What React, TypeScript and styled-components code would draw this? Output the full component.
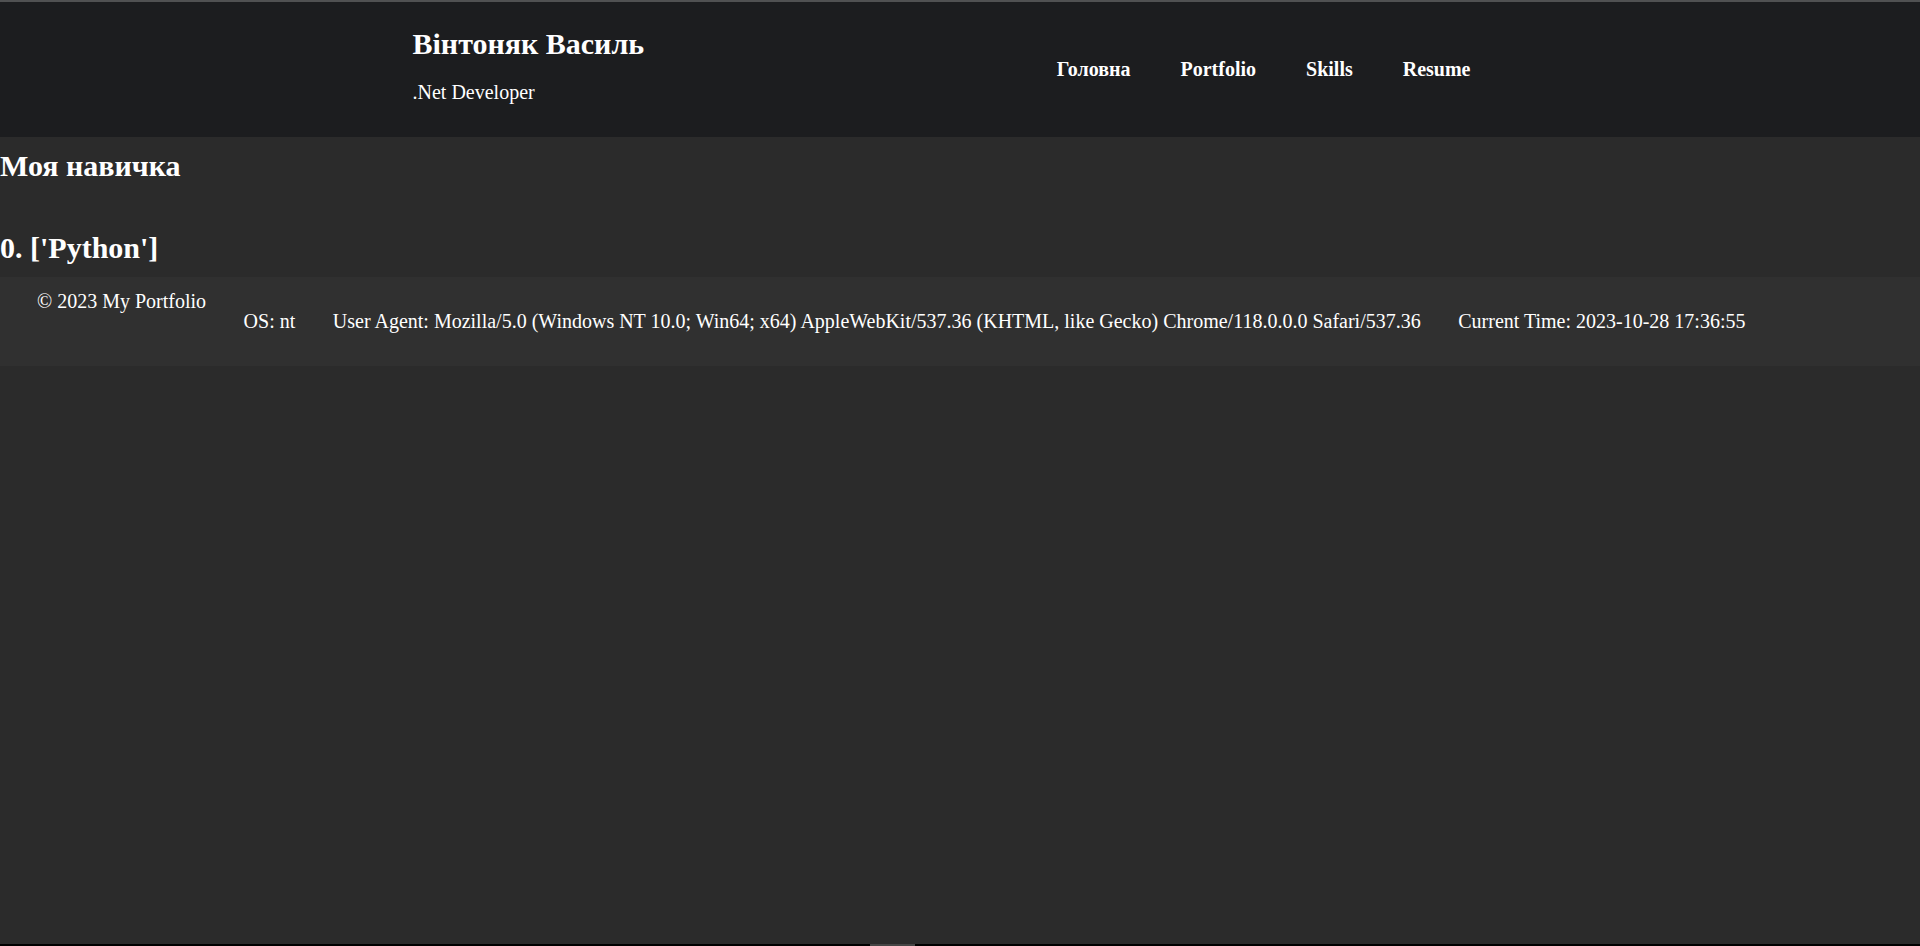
import React from "react";
import styled, { createGlobalStyle } from "styled-components";

const GlobalStyle = createGlobalStyle`
  html, body {
    margin: 0;
    padding: 0;
    background: #2b2b2b;
  }
  body {
    font-family: "Liberation Serif", "Times New Roman", serif;
    font-size: 20px;
    line-height: 23px;
    color: #ffffff;
  }
  * { box-sizing: border-box; }
`;

const Page = styled.div`
  min-height: 100vh;
  display: flex;
  flex-direction: column;
  background: #2b2b2b;
  border-top: 2px solid #505152;
`;

const Header = styled.header`
  height: 135px;
  background: #1c1d1f;
`;

const HeaderInner = styled.div`
  width: 1095px;
  height: 100%;
  margin: 0 auto;
  display: flex;
  justify-content: space-between;
  align-items: flex-start;
`;

const Brand = styled.div`
  display: flex;
  flex-direction: column;
`;

const Name = styled.h2`
  margin: 25px 0 21px;
  font-size: 30px;
  line-height: 33px;
  font-weight: 700;
`;

const Role = styled.p`
  margin: 0;
`;

const Nav = styled.nav`
  align-self: center;
  margin-right: 37px;
`;

const NavList = styled.ul`
  list-style: none;
  margin: 0;
  padding: 0;
  display: flex;
  gap: 50px;
`;

const NavLink = styled.a`
  color: #ffffff;
  font-weight: 700;
  text-decoration: none;
`;

const Main = styled.main`
  display: flex;
  flex-direction: column;
`;

const SectionTitle = styled.h2`
  margin: 12px 0 0;
  font-size: 30px;
  line-height: 33px;
  font-weight: 700;
`;

const SkillList = styled.div`
  margin-top: 49px;
`;

const SkillItem = styled.h2`
  margin: 0 0 13px;
  font-size: 30px;
  line-height: 33px;
  font-weight: 700;
`;

const Footer = styled.footer`
  height: 89px;
  background: #303030;
  display: flex;
  gap: 37.5px;
  padding-left: 37px;
`;

const Copyright = styled.p`
  margin: 13px 0 0;
  align-self: flex-start;
`;

const InfoRow = styled.div`
  align-self: center;
  display: flex;
  gap: 37.5px;
  white-space: nowrap;
`;

const InfoItem = styled.span``;

const Filler = styled.div`
  flex: 1;
`;

const ScrollStrip = styled.div`
  height: 2px;
  background: #000000;
  padding-left: 870px;
`;

const Thumb = styled.div`
  width: 45px;
  height: 100%;
  background: #454545;
`;

const navItems = ["Головна", "Portfolio", "Skills", "Resume"];
const skills = ["Python"];

export default function App() {
  return (
    <>
      <GlobalStyle />
      <Page>
        <Header>
          <HeaderInner>
            <Brand>
              <Name>Вінтоняк Василь</Name>
              <Role>.Net Developer</Role>
            </Brand>
            <Nav>
              <NavList>
                {navItems.map((item) => (
                  <li key={item}>
                    <NavLink href="#">{item}</NavLink>
                  </li>
                ))}
              </NavList>
            </Nav>
          </HeaderInner>
        </Header>
        <Main>
          <SectionTitle>Моя навичка</SectionTitle>
          <SkillList>
            {skills.map((s, i) => (
              <SkillItem key={s}>
                {i}. ['{s}']
              </SkillItem>
            ))}
          </SkillList>
        </Main>
        <Footer>
          <Copyright>© 2023 My Portfolio</Copyright>
          <InfoRow>
            <InfoItem>OS: nt</InfoItem>
            <InfoItem>
              User Agent: Mozilla/5.0 (Windows NT 10.0; Win64; x64) AppleWebKit/537.36 (KHTML, like Gecko) Chrome/118.0.0.0 Safari/537.36
            </InfoItem>
            <InfoItem>Current Time: 2023-10-28 17:36:55</InfoItem>
          </InfoRow>
        </Footer>
        <Filler />
        <ScrollStrip>
          <Thumb />
        </ScrollStrip>
      </Page>
    </>
  );
}
